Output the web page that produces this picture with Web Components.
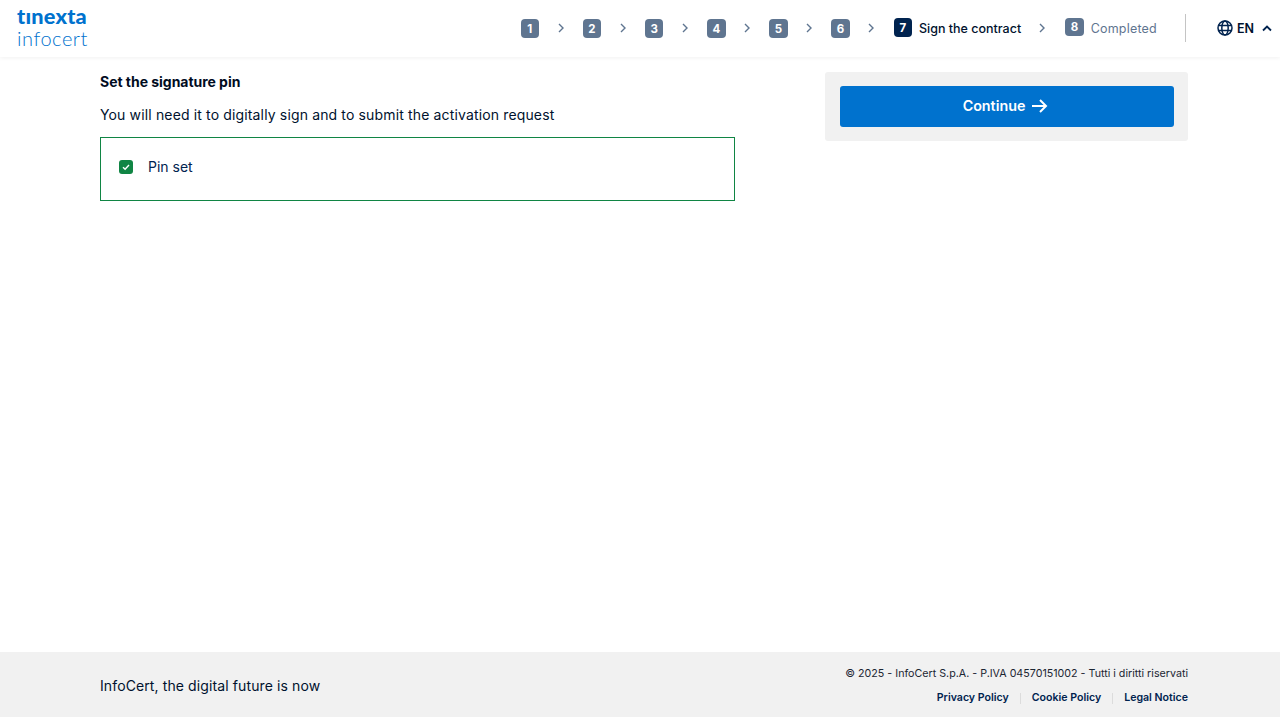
<!DOCTYPE html>
<html lang="en">
<head>
<meta charset="utf-8">
<title>InfoCert</title>
<style>
html,body{margin:0;height:100%;background:#fff}
body{font-family:Inter,"Liberation Sans",sans-serif;color:#00122e;overflow:hidden}
app-page{height:717px}
</style>
</head>
<body>
<app-page>
  <top-bar slot="header"></top-bar>
  <pin-panel slot="main" title="Set the signature pin" text="You will need it to digitally sign and to submit the activation request">Pin set</pin-panel>
  <action-box slot="aside">Continue</action-box>
  <site-footer slot="footer"></site-footer>
</app-page>

<script>
class appPage extends HTMLElement{
    constructor(){
        super();
        this.attachShadow({mode:'open'})
        this.shadowRoot.innerHTML=`
        <style>
        :host{display:flex;flex-direction:column}
        .content{flex:1;display:flex;justify-content:space-between;align-items:flex-start;padding:15px 92px 0 100px}
        </style>
        <slot name="header"></slot>
        <div class="content">
            <slot name="main"></slot>
            <slot name="aside"></slot>
        </div>
        <slot name="footer"></slot>
        `;
    }
}

class topBar extends HTMLElement{
    constructor(){
        super();
        this.attachShadow({mode:'open'})
        const chevron=`<svg class="chev" width="8" height="10" viewBox="0 0 8 10"><path d="M2 1l4 4-4 4" fill="none" stroke="#5f7590" stroke-width="1.4"/></svg>`;
        let steps="";
        for(let i=1;i<=6;i++){
            steps+=`<span class="num">${i}</span>${chevron}`;
        }
        this.shadowRoot.innerHTML=`
        <style>
        :host{display:flex;height:57px;box-sizing:border-box;align-items:center;padding:0 8px 1px 17px;background:#fff;box-shadow:0 1px 4px rgba(0,0,0,.06);position:relative}
        .logo{display:flex;flex-direction:column;color:#0072ce;margin-right:auto;margin-top:-1px}
        .logo b{font:900 21.7px/18px Lato,sans-serif;letter-spacing:.2px}
        .logo span{font:300 20px/20px Lato,sans-serif;letter-spacing:.55px;margin-top:3px}
        .steps{display:flex;align-items:center;font-size:12.5px;font-weight:500}
        .num{width:18.5px;height:18.5px;border-radius:4px;background:#5f7590;color:#fff;display:flex;align-items:center;justify-content:center;font-size:11.5px;font-weight:700;margin-top:1px}
        .chev{margin:0 18.1px 0 17.57px;flex:none}
        .num.on{background:#00234f;margin:-1px 7px 0 0}
        .num.off{margin:-2px 7px 0 0}
        .done{color:#5f7590;font-weight:400;letter-spacing:.2px}
        .sep{width:1px;height:28px;background:#c4c4c4;margin:0 31px 0 28px}
        .lang{display:flex;align-items:center;font-size:12.5px;font-weight:600}
        .lang svg.globe{margin-right:4px}
        .lang svg.up{margin-left:8px}
        </style>
        <div class="logo"><b>tınexta</b><span>infocert</span></div>
        <div class="steps">
            ${steps}
            <span class="num on">7</span><span class="cur">Sign the contract</span>
            <svg class="chev" style="margin:0 19px 0 17px" width="8" height="10" viewBox="0 0 8 10"><path d="M2 1l4 4-4 4" fill="none" stroke="#5f7590" stroke-width="1.4"/></svg>
            <span class="num off">8</span><span class="done">Completed</span>
        </div>
        <div class="sep"></div>
        <div class="lang">
            <svg class="globe" width="16" height="16" viewBox="0 0 16 16" fill="none" stroke="#00234f" stroke-width="1.5"><circle cx="8" cy="8" r="7"/><ellipse cx="8" cy="8" rx="3.2" ry="7"/><path d="M1.5 5.5h13M1.5 10.5h13"/></svg>
            EN
            <svg class="up" width="10" height="7" viewBox="0 0 10 7"><path d="M1 5.5l4-4 4 4" fill="none" stroke="#00234f" stroke-width="1.8"/></svg>
        </div>
        `;
    }
}

class pinPanel extends HTMLElement{
    constructor(){
        super();
        this.attachShadow({mode:'open'})
    }
    connectedCallback(){
        this.shadowRoot.innerHTML=`
        <style>
        :host{display:block;width:634.5px;color:#00122e}
        h2{font-size:14px;line-height:20px;font-weight:700;margin:0 0 13px;color:#000c1f;letter-spacing:-.03px}
        p{font-size:14px;line-height:20px;margin:0 0 12px;font-weight:400;letter-spacing:.145px}
        .box{border:1px solid #108544;height:64px;box-sizing:border-box;display:flex;align-items:center;padding:0 0 5px 18px;font-size:14px;color:#00234f}
        .check{width:14px;height:14px;border-radius:3px;background:#108544;display:flex;align-items:center;justify-content:center;margin-right:15px}
        </style>
        <h2>${this.getAttribute("title")}</h2>
        <p>${this.getAttribute("text")}</p>
        <div class="box">
            <span class="check"><svg width="10" height="10" viewBox="0 0 10 10"><path d="M2 5.2l2.1 2L8 3" fill="none" stroke="#fff" stroke-width="1.4"/></svg></span>
            <slot></slot>
        </div>
        `;
    }
}

class actionBox extends HTMLElement{
    constructor(){
        super();
        this.attachShadow({mode:'open'})
        this.shadowRoot.innerHTML=`
        <style>
        :host{display:block;width:363px;box-sizing:border-box;padding:14px 14px 14px 15px;background:#f1f1f1;border-radius:3px}
        button{width:100%;height:41px;border:0;border-radius:3px;background:#0072ce;color:#fff;font:600 14.3px Inter,sans-serif;display:flex;align-items:center;justify-content:center;gap:6px;padding:0 3px 2px 0}
        </style>
        <button type="button"><slot></slot>
            <svg width="17" height="16" viewBox="0 0 17 16" fill="none" stroke="#fff" stroke-width="2"><path d="M1 8h14M9 2l6 6-6 6"/></svg>
        </button>
        `;
    }
}

class siteFooter extends HTMLElement{
    constructor(){
        super();
        this.attachShadow({mode:'open'})
        this.shadowRoot.innerHTML=`
        <style>
        :host{display:flex;justify-content:space-between;align-items:flex-start;height:65px;box-sizing:border-box;padding:0 92px 0 100px;background:#f1f1f1;color:#00122e}
        .slogan{font-size:14px;line-height:20px;margin-top:24px;letter-spacing:.11px}
        .right{display:flex;flex-direction:column;align-items:flex-end}
        .copy{font-size:10.7px;line-height:16px;margin-top:14px;color:#1c2633}
        .links{display:flex;align-items:center;margin-top:8px;font-size:10.6px;line-height:16px;font-weight:600;color:#00234f}
        .links i{width:1px;height:11px;background:#dcdcdc;margin:0 11px}
        </style>
        <div class="slogan">InfoCert, the digital future is now</div>
        <div class="right">
            <div class="copy">© 2025 - InfoCert S.p.A. - P.IVA 04570151002 - Tutti i diritti riservati</div>
            <div class="links"><span>Privacy Policy</span><i></i><span>Cookie Policy</span><i></i><span>Legal Notice</span></div>
        </div>
        `;
    }
}

customElements.define('app-page',appPage)
customElements.define('top-bar',topBar)
customElements.define('pin-panel',pinPanel)
customElements.define('action-box',actionBox)
customElements.define('site-footer',siteFooter)
</script>
</body>
</html>
